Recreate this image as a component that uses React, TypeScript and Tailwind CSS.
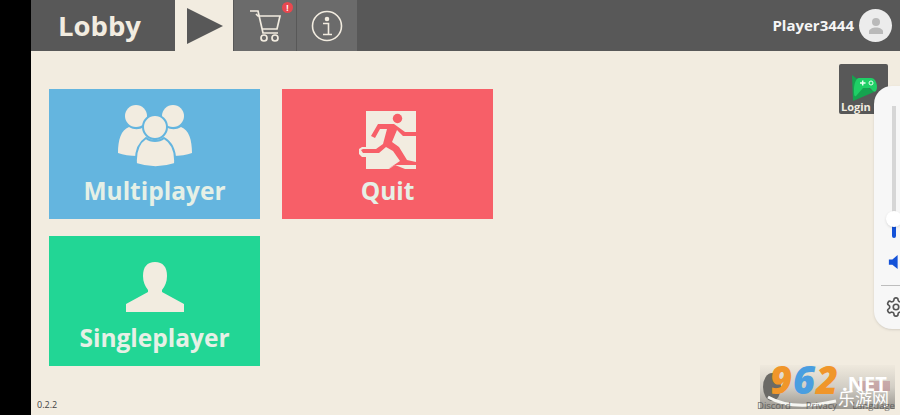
import { ReactNode } from "react";

const font = { fontFamily: '"Open Sans", sans-serif' };

const MultiIcon = () => (
  <svg className="mb-[1px]" width="74" height="64" viewBox="0 0 74 64" fill="#f2ece0">
    <circle cx="18" cy="12" r="11" />
    <circle cx="55" cy="12" r="11" />
    <path d="M0 49C0 36 3 26 11 23C16 26 21 26 26 23C34 26 36 36 36 48L20 52C12 52 5 51 0 49Z" />
    <path d="M74 49C74 36 71 26 63 23C58 26 53 26 48 23C40 26 38 36 38 48L54 52C62 52 69 51 74 49Z" />
    <circle cx="37" cy="23" r="12" stroke="#64b5df" strokeWidth="2" />
    <path
      d="M18 60C17 46 22 38 28 34C33 38 41 38 46 34C53 38 58 46 57 60C45 64 30 64 18 60Z"
      stroke="#64b5df"
      strokeWidth="2"
    />
  </svg>
);

const ExitIcon = () => (
  <svg width="57" height="58" viewBox="0 0 57 58">
    <path d="M7 0H57V58H46L36 54L30 58H7V46H3L0 43V38L3 36H7Z" fill="#f2ece0" />
    <circle cx="38.500" cy="7.500" r="4.700" fill="#f75f68" />
    <path
      d="M12 25L19 13H35L46 21H57V25H44L38 19L33 31L40 36L48 49L57 51V54H46L36 54L29 58L41 50L34 40L27 36L20 42H4L2 39L4 38H17L24 33L28 18H21L16 27Z"
      fill="#f75f68"
    />
  </svg>
);

const SingleIcon = () => (
  <svg className="mb-[4px]" width="58" height="50" viewBox="0 0 58 50" fill="#f2ece0">
    <path d="M29 0C37 0 41 5 41 14C41 20 39 24 36 28V30L58 42V50H0V42L22 30V28C19 24 17 20 17 14C17 5 21 0 29 0Z" />
  </svg>
);

const Card = ({ color, label, icon }: { color: string; label: string; icon: ReactNode }) => (
  <button className={`w-[211px] h-[130px] flex flex-col items-center ${color}`}>
    <div className="h-[80px] flex items-end justify-center">{icon}</div>
    <div className="mt-[6px] text-[24.5px] leading-[32px] font-bold text-[#e6f0e6]">{label}</div>
  </button>
);

const App = () => {
  return (
    <div className="w-[900px] h-[415px] bg-black flex overflow-hidden relative" style={font}>
      <div className="w-[31px] shrink-0 bg-black"></div>
      <main className="flex-1 bg-[#f2ece0] flex flex-col">
        <header className="h-[51px] bg-[#585858] flex items-stretch">
          <div className="w-[144px] flex items-center pl-[27px] text-[27.500px] font-bold text-[#f2ece0]">
            Lobby
          </div>
          <div className="w-[58px] h-[51px] bg-[#f2ece0] flex items-center justify-center pl-[2px]">
            <svg width="38" height="36" viewBox="0 0 38 36">
              <path d="M1 0L37 18L1 36Z" fill="#585858" />
            </svg>
          </div>
          <div className="ml-[1px] w-[62px] bg-[#6b6b6b] flex items-center justify-center relative">
            <svg width="32" height="34" viewBox="0 0 32 34" fill="none" stroke="#f2ece0" strokeWidth="1.700">
              <path d="M1 2H9L14 24H29" />
              <path d="M7 5L9 7H31L28 20H13" />
              <circle cx="15" cy="29" r="3" />
              <circle cx="26" cy="29" r="3" />
            </svg>
            <div className="absolute top-[2px] right-[3px] w-[11px] h-[11px] rounded-full bg-[#e8484f] text-white text-[8px] leading-[11px] font-bold text-center">
              !
            </div>
          </div>
          <div className="ml-[1px] w-[60px] bg-[#6b6b6b] flex items-center justify-center">
            <svg width="32" height="32" viewBox="0 0 32 32" fill="none" stroke="#f2ece0" strokeWidth="1.600">
              <circle cx="16" cy="16" r="14.500" />
              <circle cx="16" cy="9" r="1.500" fill="#f2ece0" />
              <path d="M12 13.500H17.500V24M12 24.500H21" />
            </svg>
          </div>
          <div className="ml-auto flex items-center gap-[5px] pr-[8px]">
            <span className="text-[15px] font-bold text-[#f5f5f5]">Player3444</span>
            <div className="w-[33px] h-[33px] rounded-full bg-[#ececec] flex items-center justify-center">
              <svg width="18" height="18" viewBox="0 0 18 18" fill="#b9b9b9">
                <circle cx="9" cy="5" r="4" />
                <path d="M2 17V14.500C2 12 6 10.500 9 10.500C12 10.500 16 12 16 14.500V17Z" />
              </svg>
            </div>
          </div>
        </header>

        <div className="flex-1 relative pl-[18px] pt-[38px]">
          <div className="grid grid-cols-[211px_211px] gap-x-[22px] gap-y-[17px]">
            <Card color="bg-[#64b5df]" label="Multiplayer" icon={<MultiIcon />} />
            <Card color="bg-[#f75f68]" label="Quit" icon={<ExitIcon />} />
            <Card color="bg-[#22d695]" label="Singleplayer" icon={<SingleIcon />} />
          </div>

          <div className="absolute left-[6px] bottom-[4px] text-[9px] leading-[12px] text-[#444]">0.2.2</div>

          {/* login button */}
          <div className="absolute left-[808px] top-[13px] w-[49px] h-[50px] rounded-[2px] bg-[#585858] flex flex-col items-center overflow-hidden">
            <svg className="mt-[10px]" width="28" height="27" viewBox="0 0 28 27">
              <path d="M2 1L24 18L3 27Z" fill="#15a34f" />
              <path d="M9 4H21C25 4 27 9 27 13C27 18 24 19 22 16L20 14H13L6 22C4 23 4 20 4 16C4 10 6 4 9 4Z" fill="#1fcf66" />
              <path d="M10 9H15.500M12.700 6.500V11.500" stroke="#e9fff0" strokeWidth="1.500" />
              <circle cx="21" cy="9" r="2" fill="none" stroke="#e9fff0" strokeWidth="1" />
            </svg>
            <div className="text-[11px] leading-[12px] font-bold text-[#f2ece0] whitespace-nowrap self-start pl-[2px]">Login GP</div>
          </div>

          {/* volume panel */}
          <div className="absolute left-[843px] top-[35px] w-[60px] h-[243px] rounded-[18px] bg-[#f7f7f7] shadow-sm">
            <div className="absolute left-[18px] top-[20px] w-[4px] h-[120px] bg-[#d6d6d6]"></div>
            <div className="absolute left-[18px] top-[132px] w-[4px] h-[20px] rounded-b bg-[#1452d8]"></div>
            <div className="absolute left-[12px] top-[125px] w-[16px] h-[16px] rounded-full bg-white shadow"></div>
            <svg className="absolute left-[14px] top-[169px]" width="14" height="14" viewBox="0 0 14 16" fill="#1452d8">
              <path d="M0 5H4L10 0V16L4 11H0Z" />
            </svg>
            <div className="absolute left-[7px] top-[199px] w-[24px] h-[1px] bg-[#bdbdbd]"></div>
            <svg className="absolute left-[11px] top-[210px]" width="22" height="22" viewBox="0 0 24 24" fill="none" stroke="#555" strokeWidth="1.800">
              <path d="M12.220 2h-.440a2 2 0 0 0-2 2v.180a2 2 0 0 1-1 1.730l-.430.250a2 2 0 0 1-2 0l-.150-.080a2 2 0 0 0-2.730.730l-.220.380a2 2 0 0 0 .730 2.730l.150.100a2 2 0 0 1 1 1.720v.510a2 2 0 0 1-1 1.740l-.150.090a2 2 0 0 0-.730 2.730l.220.380a2 2 0 0 0 2.730.730l.150-.080a2 2 0 0 1 2 0l.430.250a2 2 0 0 1 1 1.730V20a2 2 0 0 0 2 2h.440a2 2 0 0 0 2-2v-.180a2 2 0 0 1 1-1.730l.430-.250a2 2 0 0 1 2 0l.150.080a2 2 0 0 0 2.730-.730l.220-.390a2 2 0 0 0-.730-2.730l-.150-.080a2 2 0 0 1-1-1.740v-.500a2 2 0 0 1 1-1.740l.150-.090a2 2 0 0 0 .730-2.730l-.220-.380a2 2 0 0 0-2.730-.730l-.150.080a2 2 0 0 1-2 0l-.430-.250a2 2 0 0 1-1-1.730V4a2 2 0 0 0-2-2z" />
              <circle cx="12" cy="12" r="3" />
            </svg>
          </div>

          {/* watermark */}
          <div className="absolute left-[729px] top-[314px] w-[135px] h-[44px] overflow-hidden bg-gradient-to-b from-[#efe9dd] via-[#d2cec5] to-[#9a9790]">
            <svg className="absolute left-0 top-0" width="135" height="44" viewBox="0 0 135 44" fill="none">
              <ellipse cx="12" cy="22" rx="9" ry="14" fill="#6b6a66" />
              <path d="M8 32C25 42 50 42 76 36" stroke="#f6f6f2" strokeWidth="3" />
              <rect x="98" y="16" width="32" height="10" fill="#b9808a" opacity="0.500" />
            </svg>
            <div className="absolute left-[10px] top-[-4px] text-[38px] leading-[36px] font-extrabold italic tracking-[1px]">
              <span className="text-[#f0962a]">9</span>
              <span className="text-[#4a9ee0]">6</span>
              <span className="text-[#f0962a]">2</span>
            </div>
            <div className="absolute left-[82px] top-[8px] text-[20px] leading-[22px] font-bold text-white whitespace-nowrap">.NET</div>
            <div className="absolute left-[78px] top-[23px] text-[17px] leading-[19px] text-white whitespace-nowrap" style={{ fontFamily: '"Noto Sans CJK SC", sans-serif' }}>
              乐游网
            </div>
          </div>

          {/* footer links, half hidden by the watermark in the picture */}
          <div className="absolute left-[726px] top-[349px] text-[9.500px] leading-[12px] text-[#444]/70 whitespace-nowrap flex gap-[15px]">
            <span>Discord</span>
            <span>Privacy</span>
            <span>Language</span>
          </div>
        </div>
      </main>
    </div>
  );
};

export default App;
